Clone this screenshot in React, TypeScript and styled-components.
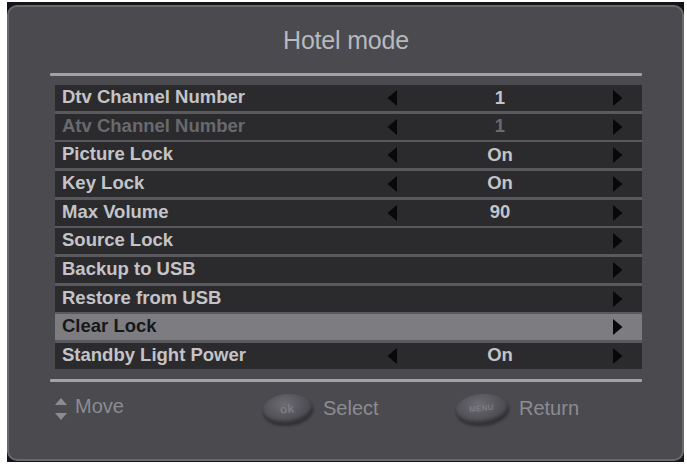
import React from 'react';
import styled, { createGlobalStyle } from 'styled-components';

const GlobalStyle = createGlobalStyle`
  html, body {
    margin: 0;
    padding: 0;
    background: #ffffff;
  }
  body {
    font-family: "Liberation Sans", Arial, sans-serif;
  }
`;

type Item = {
  label: string;
  value?: string;
  disabled?: boolean;
  selected?: boolean;
  leftArrow?: boolean;
};

const items: Item[] = [
  { label: 'Dtv Channel Number', value: '1', leftArrow: true },
  { label: 'Atv Channel Number', value: '1', leftArrow: true, disabled: true },
  { label: 'Picture Lock', value: 'On', leftArrow: true },
  { label: 'Key Lock', value: 'On', leftArrow: true },
  { label: 'Max Volume', value: '90', leftArrow: true },
  { label: 'Source Lock' },
  { label: 'Backup to USB' },
  { label: 'Restore from USB' },
  { label: 'Clear Lock', selected: true },
  { label: 'Standby Light Power', value: 'On', leftArrow: true },
];

// Frame = the dark bezel around the OSD panel
const Frame = styled.div`
  width: 677px;
  height: 460px;
  margin: 2px 0 0 7px;
  padding-top: 3px;
  box-sizing: border-box;
  background: #151517;
`;

const Panel = styled.div`
  width: 677px;
  height: 456px;
  box-sizing: border-box;
  border: 2px solid #69696e;
  border-radius: 10px;
  background: #4a4a4f;
  display: flex;
  flex-direction: column;
  padding: 18px 40px 0 41px;
`;

const Title = styled.div`
  height: 30px;
  line-height: 30px;
  font-size: 25px;
  color: #b8b8bf;
  text-align: center;
  letter-spacing: -0.2px;
`;

const Rule = styled.div<{ $top: number }>`
  height: 3px;
  margin-top: ${p => p.$top}px;
  background: #a2a2a7;
  border-radius: 1px;
`;

const List = styled.div`
  margin: 9px 0 0 5px;
  display: flex;
  flex-direction: column;
  gap: 2.67px;
  background: #5a5a5e;
`;

const Row = styled.div<{ $selected?: boolean; $disabled?: boolean }>`
  height: 26px;
  display: grid;
  grid-template-columns: 325px 11px 1fr 11px;
  align-items: center;
  padding: 0 19px 0 7px;
  background: ${p => (p.$selected ? '#7d7d81' : '#2b2b2e')};
  color: ${p => (p.$selected ? '#18181b' : p.$disabled ? '#69696e' : '#c4c4c8')};
  font-size: 18.5px;
  font-weight: bold;
  line-height: 26px;
  white-space: nowrap;
`;

const Label = styled.span`
  margin-top: -2px;
`;

const Value = styled.span`
  text-align: center;
  padding-right: 10px;
  margin-top: -1px;
`;

const ArrowSvg = styled.svg<{ $dir: 'left' | 'right' }>`
  display: block;
  justify-self: ${p => (p.$dir === 'left' ? 'start' : 'end')};
`;

const Arrow = ({ dir }: { dir: 'left' | 'right' }) => (
  <ArrowSvg $dir={dir} width="10" height="16" viewBox="0 0 10 16">
    {dir === 'left' ? (
      <polygon points="10,0 10,16 0.5,8" fill="#080809" />
    ) : (
      <polygon points="0,0 0,16 9.5,8" fill="#080809" />
    )}
  </ArrowSvg>
);

const Footer = styled.div`
  margin-top: 12px;
  height: 30px;
  display: flex;
  align-items: center;
  color: #8c8c92;
  font-size: 20px;
`;

const Hint = styled.div<{ $width?: number; $pad?: number }>`
  display: flex;
  align-items: center;
  gap: 11px;
  width: ${p => (p.$width ? `${p.$width}px` : 'auto')};
  padding-left: ${p => p.$pad ?? 0}px;
  box-sizing: border-box;
`;

const MoveText = styled.span`
  margin-left: -3px;
  margin-top: -4px;
`;

const RemoteKey = styled.div<{ $w: number }>`
  width: ${p => p.$w}px;
  height: 29px;
  border-radius: 50%;
  background: radial-gradient(ellipse at 45% 35%, #6c6c72 0%, #56565c 45%, #3c3c41 100%);
  box-shadow: 1px 3px 3px rgba(0, 0, 0, 0.35), inset 0 -2px 3px rgba(0, 0, 0, 0.3);
  transform: rotate(-6deg);
  display: flex;
  align-items: center;
  justify-content: center;
  color: #7c7c83;
  font-size: ${p => (p.$w > 50 ? '8px' : '12px')};
  font-weight: bold;
  letter-spacing: 0.3px;
`;

const UpDownIcon = () => (
  <svg width="12" height="22" viewBox="0 0 12 22">
    <polygon points="6,0 12,7 0,7" fill="#8c8c92" />
    <polygon points="0,15 12,15 6,22" fill="#8c8c92" />
  </svg>
);

export default function App() {
  return (
    <>
      <GlobalStyle />
      <Frame>
        <Panel>
          <Title>Hotel mode</Title>
          <Rule $top={18} />
          <List>
            {items.map(item => (
              <Row key={item.label} $selected={item.selected} $disabled={item.disabled}>
                <Label>{item.label}</Label>
                {item.leftArrow ? <Arrow dir="left" /> : <span />}
                <Value>{item.value ?? ''}</Value>
                <Arrow dir="right" />
              </Row>
            ))}
          </List>
          <Rule $top={10} />
          <Footer>
            <Hint $width={212} $pad={5}>
              <UpDownIcon />
              <MoveText>Move</MoveText>
            </Hint>
            <Hint $width={193}>
              <RemoteKey $w={50}>ok</RemoteKey>
              <span>Select</span>
            </Hint>
            <Hint>
              <RemoteKey $w={53}>MENU</RemoteKey>
              <span>Return</span>
            </Hint>
          </Footer>
        </Panel>
      </Frame>
    </>
  );
}
